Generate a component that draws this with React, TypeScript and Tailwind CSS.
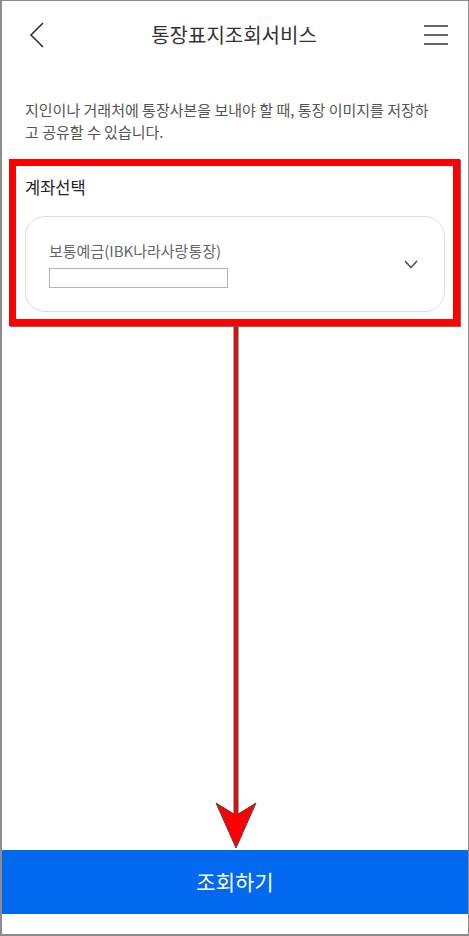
import React from "react";

const font = { fontFamily: '"Noto Sans CJK KR", "Noto Sans", sans-serif' };

function BackIcon() {
  return (
    <svg width="16" height="28" viewBox="0 0 16 28" fill="none">
      <polyline points="14,2 2,14 14,26" stroke="#333" strokeWidth="1.6" />
    </svg>
  );
}

function MenuIcon() {
  return (
    <svg width="26" height="22" viewBox="0 0 26 22" fill="none">
      <line x1="1" y1="2" x2="25" y2="2" stroke="#333" strokeWidth="1.5" />
      <line x1="1" y1="11" x2="25" y2="11" stroke="#333" strokeWidth="1.5" />
      <line x1="1" y1="20" x2="25" y2="20" stroke="#333" strokeWidth="1.5" />
    </svg>
  );
}

function ChevronDown() {
  return (
    <svg width="14" height="9" viewBox="0 0 14 9" fill="none">
      <polyline points="1,1 7,7.5 13,1" stroke="#444" strokeWidth="1.4" />
    </svg>
  );
}

// annotation arrow drawn over the page
function Arrow() {
  return (
    <svg
      className="absolute left-0 top-0 pointer-events-none"
      width="469"
      height="936"
      viewBox="0 0 469 936"
    >
      <polygon
        points="232,326 236,326 236,813 254,802 234,847 214,802 232,813"
        fill="#ff0000"
        stroke="#4a4a4a"
        strokeWidth="1"
        strokeLinejoin="miter"
      />
    </svg>
  );
}

export default function App() {
  return (
    <div
      className="relative w-[469px] h-[936px] bg-white border-l-2 border-t border-r border-b-2 border-[#8c8c8c] flex flex-col"
      style={font}
    >
      {/* header */}
      <div className="h-[67px] flex items-center justify-between pl-[27px] pr-[19px]">
        <BackIcon />
        <h1 className="text-[20px] text-[#333] leading-none">통장표지조회서비스</h1>
        <MenuIcon />
      </div>

      <p className="mt-[31px] pl-[23px] pr-[26px] text-[15px] leading-[22px] text-[#555]">
        지인이나 거래처에 통장사본을 보내야 할 때, 통장 이미지를 저장하고 공유할 수 있습니다.
      </p>

      {/* account select (highlighted) */}
      <div className="mt-[16px] ml-[7px] mr-[8px] border-[7px] border-[#ff0000] shadow-[1px_1px_1px_rgba(0,0,0,0.55)] pt-[9px] pb-[7px] pl-[9px] pr-[8px]">
        <div className="text-[16.5px] leading-[24px] text-[#222]">계좌선택</div>
        <div className="mt-[17px] h-[96px] rounded-[20px] border border-[#dcdcdc] flex items-center justify-between pl-[23px] pr-[26px]">
          <div className="flex flex-col">
            <span className="text-[15px] leading-[20px] text-[#666]">보통예금(IBK나라사랑통장)</span>
            <div className="mt-[7px] w-[179px] h-[20px] border border-[#b4b4b4]" />
          </div>
          <ChevronDown />
        </div>
      </div>

      <div className="flex-1" />

      <button className="h-[64px] w-full bg-[#0069ef] text-white text-[21px] flex items-center justify-center">
        조회하기
      </button>
      <div className="h-[20px]" />

      <Arrow />
    </div>
  );
}
